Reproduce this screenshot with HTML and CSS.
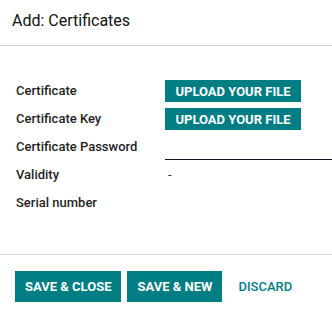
FILE: index.html
```html
<!DOCTYPE html>
<html>
<head>
<meta charset="utf-8">
<link rel="stylesheet" href="styles.css">
</head>
<body>
<div class="modal">
  <header class="head"><h4 class="title">Add: Certificates</h4></header>
  <main class="body">
    <div class="form">
      <div class="label">Certificate</div>
      <div class="value"><button class="upload">UPLOAD YOUR FILE</button></div>
      <div class="label">Certificate Key</div>
      <div class="value"><button class="upload">UPLOAD YOUR FILE</button></div>
      <div class="label">Certificate Password</div>
      <div class="value"><input class="pwd" type="password"></div>
      <div class="label">Validity</div>
      <div class="value"><span class="dash">-</span></div>
      <div class="label">Serial number</div>
      <div class="value"></div>
    </div>
  </main>
  <footer class="foot">
    <button class="btn primary">SAVE &amp; CLOSE</button>
    <button class="btn primary">SAVE &amp; NEW</button>
    <button class="btn link">DISCARD</button>
  </footer>
</div>
</body>
</html>
```
FILE: styles.css
```css
html, body { margin: 0; padding: 0; background: #fff; }
body { font-family: Roboto, "Noto Sans", sans-serif; color: #212529; width: 332px; height: 316px; overflow: hidden; }
.modal { display: flex; flex-direction: column; }
.head { height: 45px; border-bottom: 1px solid #d0d0d0; display: flex; align-items: center; padding: 0 12px; box-sizing: content-box; }
.title { margin: 0; font-size: 16px; font-weight: 400; color: #111; position: relative; top: -2px; }
.body { padding: 30px 0 38px 16px; border-bottom: 1px solid #d8d8dc; }
.form { display: grid; grid-template-columns: 149px 1fr; grid-auto-rows: 28px; }
.label { font-size: 13px; font-weight: 500; color: #1f1f1f; display: flex; align-items: center; }
.value { display: flex; align-items: center; }
.upload { background: #017e84; color: #fff; border: 0; height: 22px; width: 136px; padding: 0; margin-top: 2px; font-family: Roboto, sans-serif; font-weight: 700; font-size: 13px; letter-spacing: 0; cursor: pointer; }
.pwd { border: 0; border-bottom: 1px solid #111827; width: 100%; height: 25px; padding: 0; margin-top: 2px; outline: none; background: transparent; box-sizing: border-box; }
.dash { font-size: 13px; margin-left: 3px; color: #333; }
.foot { padding: 16px 15px; display: flex; gap: 6px; }
.btn { height: 31px; padding: 0 10px; border: 0; font-family: Roboto, sans-serif; font-weight: 700; font-size: 13px; cursor: pointer; }
.primary { background: #017e84; color: #fff; }
.link { background: transparent; color: #017e84; padding: 0 10px; font-weight: 500; }
```
